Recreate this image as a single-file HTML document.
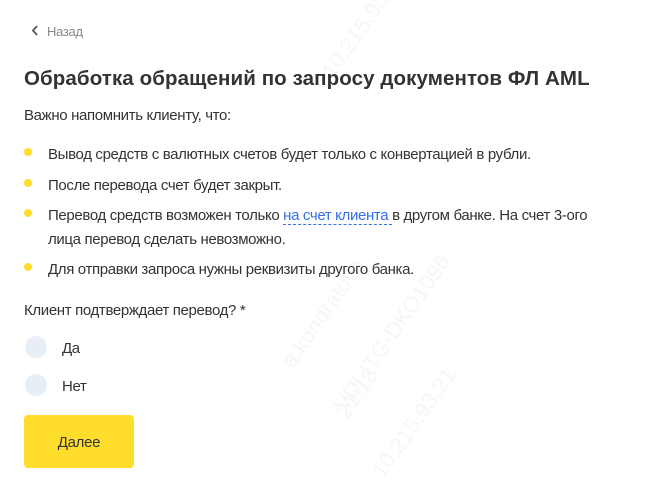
<!DOCTYPE html>
<html><head><meta charset="utf-8"><style>
body{margin:0;width:649px;height:475px;background:#fff;font-family:"Liberation Sans",sans-serif;color:#333;position:relative;overflow:hidden}
.a{position:absolute;white-space:nowrap}
.t{font-size:15px;letter-spacing:-0.35px;line-height:18px}
.dot{position:absolute;width:8px;height:8px;border-radius:50%;background:#ffdd2d}
.r{position:absolute;width:22px;height:22px;border-radius:50%;background:#e8eef6}
.wm{position:absolute;color:#f6f6f6;font-size:22px;transform:rotate(-55deg);white-space:nowrap}
</style></head><body>
<div class="wm" style="left:260px;top:300px">a.kondratova</div>
<div class="wm" style="left:300px;top:320px">VDI-ITG-DKO1096</div>
<div class="wm" style="left:330px;top:380px">21:18</div>
<div class="wm" style="left:350px;top:410px">10.215.93.21</div>
<div class="wm" style="left:300px;top:10px">10.215.93.21</div>
<svg class="a" style="left:31px;top:25px" width="8" height="11" viewBox="0 0 8 11"><path d="M6 1L2 5.5L6 10" stroke="#555" stroke-width="1.8" fill="none"/></svg>
<div class="a" style="left:47px;top:24px;font-size:13px;color:#888;letter-spacing:-0.3px">Назад</div>
<div class="a" style="left:24px;top:67px;font-size:20.5px;font-weight:bold;color:#333;letter-spacing:0.1px">Обработка обращений по запросу документов ФЛ AML</div>
<div class="a t" style="left:24px;top:107px">Важно напомнить клиенту, что:</div>
<div class="dot" style="left:24px;top:148px"></div>
<div class="a t" style="left:48px;top:146px">Вывод средств с валютных счетов будет только с конвертацией в рубли.</div>
<div class="dot" style="left:24px;top:179px"></div>
<div class="a t" style="left:48px;top:177px">После перевода счет будет закрыт.</div>
<div class="dot" style="left:24px;top:209px"></div>
<div class="a t" style="left:48px;top:207px">Перевод средств возможен только <span style="color:#336fee;border-bottom:1px dashed #336fee">на счет клиента </span> в другом банке. На счет 3-ого</div>
<div class="a t" style="left:48px;top:231px">лица перевод сделать невозможно.</div>
<div class="dot" style="left:24px;top:263px"></div>
<div class="a t" style="left:48px;top:261px">Для отправки запроса нужны реквизиты другого банка.</div>
<div class="a t" style="left:24px;top:302px">Клиент подтверждает перевод? *</div>
<div class="r" style="left:25px;top:336px"></div>
<div class="a t" style="left:62px;top:340px">Да</div>
<div class="r" style="left:25px;top:374px"></div>
<div class="a t" style="left:62px;top:378px">Нет</div>
<div class="a" style="left:24px;top:415px;width:110px;height:53px;background:#ffdd2d;border-radius:4px;text-align:center;line-height:55px;font-size:15px;color:#333;letter-spacing:-0.3px">Далее</div>
</body></html>
